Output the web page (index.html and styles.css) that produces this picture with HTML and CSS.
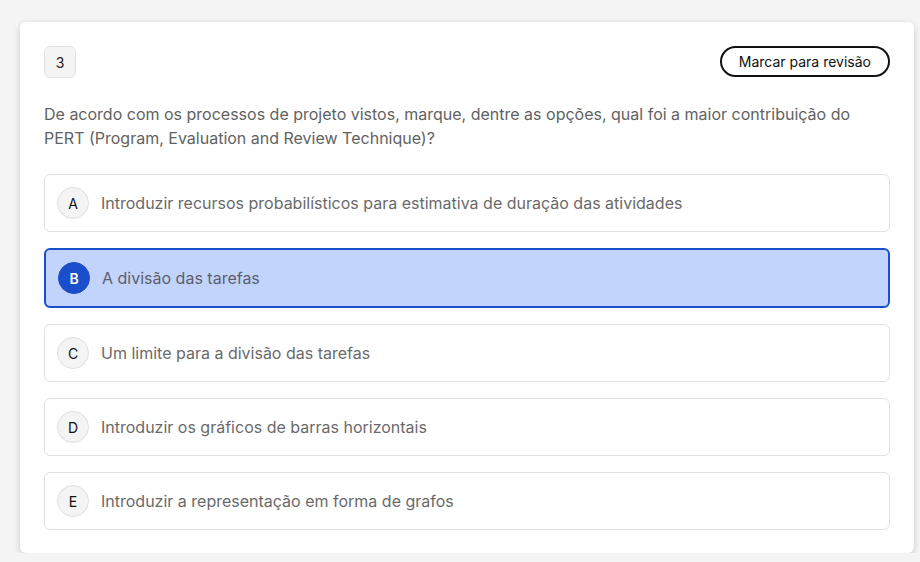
FILE: index.html
```html
<!DOCTYPE html>
<html lang="pt">
<head>
<meta charset="utf-8">
<link rel="stylesheet" href="styles.css">
</head>
<body>
<div class="card">
  <div class="head">
    <div class="num">3</div>
    <button class="mark">Marcar para revisão</button>
  </div>
  <p class="question">De acordo com os processos de projeto vistos, marque, dentre as opções, qual foi a maior contribuição do PERT (Program, Evaluation and Review Technique)?</p>
  <div class="options">
    <div class="opt"><span class="letter">A</span><span class="txt">Introduzir recursos probabilísticos para estimativa de duração das atividades</span></div>
    <div class="opt sel"><span class="letter">B</span><span class="txt">A divisão das tarefas</span></div>
    <div class="opt"><span class="letter">C</span><span class="txt">Um limite para a divisão das tarefas</span></div>
    <div class="opt"><span class="letter">D</span><span class="txt">Introduzir os gráficos de barras horizontais</span></div>
    <div class="opt"><span class="letter">E</span><span class="txt">Introduzir a representação em forma de grafos</span></div>
  </div>
</div>
</body>
</html>
```
FILE: styles.css
```css
html, body {
  margin: 0;
  background: #f4f4f4;
  font-family: Inter, "Noto Sans", sans-serif;
}
body {
  padding: 22px 6px 0 20px;
}
.card {
  background: #fff;
  border-radius: 6px;
  box-shadow: 0 2px 6px rgba(0,0,0,0.18);
  padding: 24px 24px 23px;
  width: 846px;
}
.head {
  display: flex;
  justify-content: space-between;
  align-items: flex-start;
}
.num {
  width: 30px;
  height: 30px;
  box-sizing: content-box;
  border: 1px solid #e2e2e2;
  background: #f4f4f4;
  border-radius: 6px;
  display: flex;
  align-items: center;
  justify-content: center;
  font-size: 14px;
  color: #222;
}
.mark {
  height: 31px;
  padding: 0 17px;
  border: 2px solid #111;
  border-radius: 16px;
  background: #fff;
  font-family: Inter, sans-serif;
  font-size: 14px;
  color: #111;
}
.question {
  margin: 24px 0 24px;
  font-size: 16px;
  line-height: 24px;
  color: #626262;
}
.options {
  display: flex;
  flex-direction: column;
  gap: 16px;
}
.opt {
  border: 1px solid #e0e0e0;
  border-radius: 6px;
  display: flex;
  align-items: center;
  padding: 12px;
  gap: 12px;
}
.letter {
  width: 30px;
  height: 30px;
  flex: none;
  border: 1px solid #e0e0e0;
  background: #f4f4f4;
  border-radius: 50%;
  display: flex;
  align-items: center;
  justify-content: center;
  font-size: 14px;
  color: #111;
}
.txt {
  font-size: 16px;
  color: #6a6a6a;
}
.opt.sel {
  border: 2px solid #1a4ecb;
  background: #c3d4fc;
}
.opt.sel .letter {
  background: #1a4ecb;
  border-color: #1a4ecb;
  color: #fff;
  font-weight: 600;
}
.opt.sel .txt {
  color: #5b5f6c;
}
```
